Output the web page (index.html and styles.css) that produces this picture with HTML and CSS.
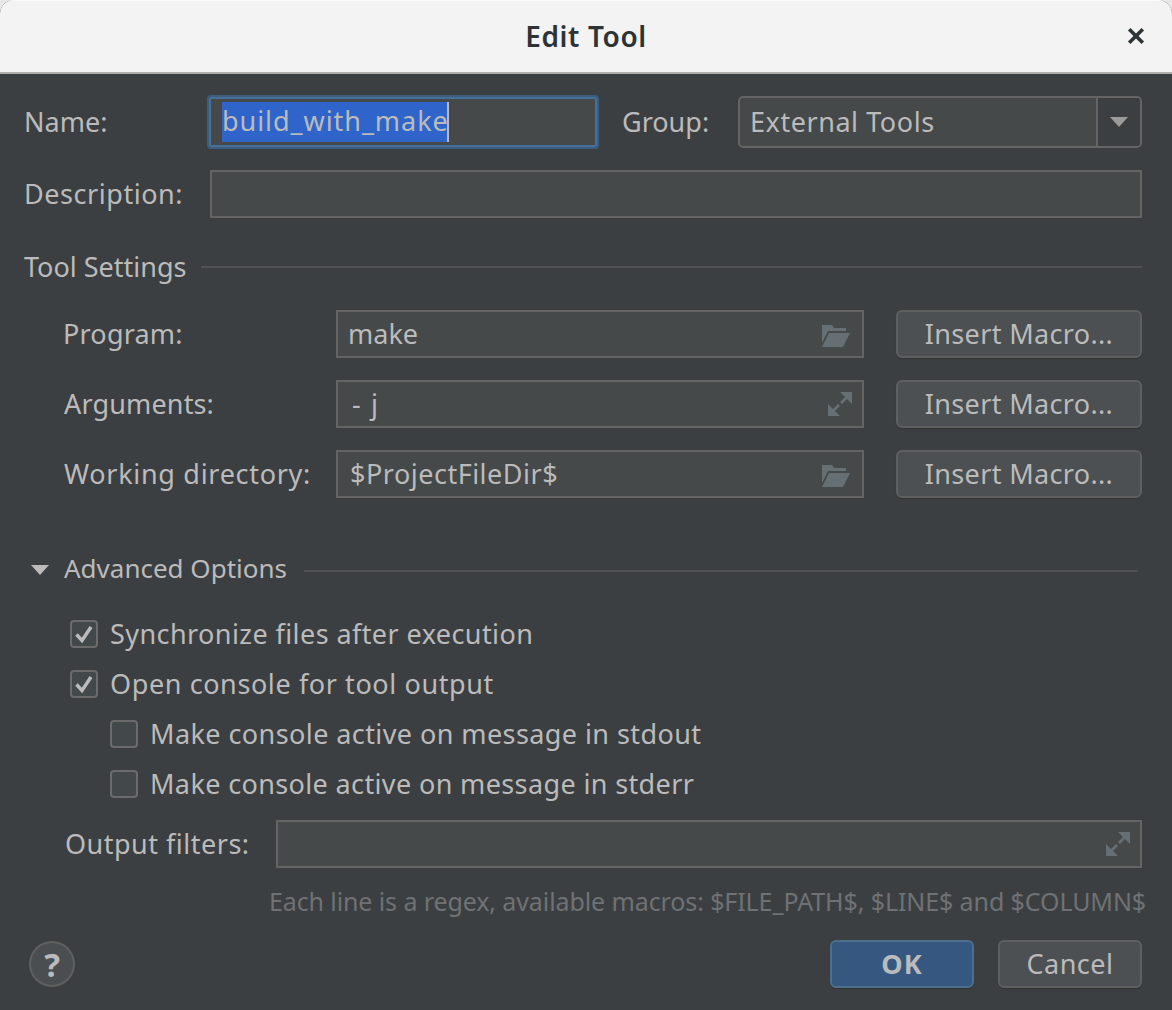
FILE: index.html
```html
<!DOCTYPE html>
<html lang="en">
<head>
    <meta charset="UTF-8">
    <meta name="viewport" content="width=device-width, initial-scale=1.0">
    <title>Edit Tool</title>
    <link rel="stylesheet" href="styles.css">
</head>
<body>
    <div class="window">
        <div class="titlebar">
            <span class="titleText">Edit Tool</span>
            <svg class="closeIcon" width="18" height="18" viewBox="0 0 18 18"><path d="M2.2 2.2L15.8 15.8M15.8 2.2L2.2 15.8" stroke="#2e3436" stroke-width="3.6" fill="none"/></svg>
        </div>

        <div class="content">
            <div class="row nameRow">
                <label class="nameLabel">Name:</label>
                <div class="nameField"><span class="selected">build_with_make</span><span class="caret"></span></div>
                <label class="groupLabel">Group:</label>
                <div class="combo">
                    <span class="comboText">External Tools</span>
                    <span class="comboArrow"><svg width="18" height="10" viewBox="0 0 18 10"><path d="M0 0H18L9 10Z" fill="#9b9b9b"/></svg></span>
                </div>
            </div>

            <div class="row descRow">
                <label class="descLabel">Description:</label>
                <div class="field"></div>
            </div>

            <div class="section toolSection">
                <span>Tool Settings</span>
                <div class="sectionLine"></div>
            </div>

            <div class="row toolRow firstTool">
                <label class="toolLabel">Program:</label>
                <div class="field toolField">
                    <span>make</span>
                    <svg class="fieldIcon folderIcon" width="30" height="24" viewBox="0 0 30 24"><path class="iconFill" d="M1 1H11L13 4H25V7H7L1 19Z M8 9H29L22 23H1Z"/></svg>
                </div>
                <button class="macroBtn" type="button">Insert Macro...</button>
            </div>
            <div class="row toolRow">
                <label class="toolLabel argLabel">Arguments:</label>
                <div class="field toolField">
                    <span class="argText">- j</span>
                    <svg class="fieldIcon expandIcon" width="24" height="24" viewBox="0 0 24 24"><path class="iconFill" d="M12 0H24V12L19 7L14 12L12 10L17 5Z M12 24H0V12L5 17L10 12L12 14L7 19Z"/></svg>
                </div>
                <button class="macroBtn" type="button">Insert Macro...</button>
            </div>
            <div class="row toolRow">
                <label class="toolLabel dirLabel">Working directory:</label>
                <div class="field toolField">
                    <span class="dirText">$ProjectFileDir$</span>
                    <svg class="fieldIcon folderIcon" width="30" height="24" viewBox="0 0 30 24"><path class="iconFill" d="M1 1H11L13 4H25V7H7L1 19Z M8 9H29L22 23H1Z"/></svg>
                </div>
                <button class="macroBtn" type="button">Insert Macro...</button>
            </div>

            <div class="section advSection">
                <svg class="advArrow" width="18" height="10" viewBox="0 0 18 10"><path d="M0 0H18L9 10Z" fill="#bbbbbb"/></svg>
                <span class="advText">Advanced Options</span>
                <div class="sectionLine advLine"></div>
            </div>

            <div class="checks">
                <div class="checkRow">
                    <span class="checkBox"><svg width="20" height="20" viewBox="0 0 20 20"><path d="M2.5 10.5L8 16.5L17 3" stroke="#bbbbbb" stroke-width="3.4" fill="none"/></svg></span>
                    <span class="checkText">Synchronize files after execution</span>
                </div>
                <div class="checkRow">
                    <span class="checkBox"><svg width="20" height="20" viewBox="0 0 20 20"><path d="M2.5 10.5L8 16.5L17 3" stroke="#bbbbbb" stroke-width="3.4" fill="none"/></svg></span>
                    <span class="checkText openText">Open console for tool output</span>
                </div>
                <div class="checkRow nested">
                    <span class="checkBox"></span>
                    <span class="checkText">Make console active on message in stdout</span>
                </div>
                <div class="checkRow nested">
                    <span class="checkBox"></span>
                    <span class="checkText errText">Make console active on message in stderr</span>
                </div>
            </div>

            <div class="row filterRow">
                <label class="filterLabel">Output filters:</label>
                <div class="field toolField">
                    <svg class="fieldIcon expandIcon" width="24" height="24" viewBox="0 0 24 24"><path class="iconFill" d="M12 0H24V12L19 7L14 12L12 10L17 5Z M12 24H0V12L5 17L10 12L12 14L7 19Z"/></svg>
                </div>
            </div>
            <div class="hint">Each line is a regex, available macros: $FILE_PATH$, $LINE$ and $COLUMN$</div>

            <div class="footer">
                <span class="helpBtn">?</span>
                <div class="footerBtns">
                    <button class="okBtn" type="button">OK</button>
                    <button class="cancelBtn" type="button">Cancel</button>
                </div>
            </div>
        </div>
    </div>
</body>
</html>
```

FILE: styles.css
```css
html, body {
    margin: 0;
    padding: 0;
    height: 100%;
    background-color: #e8e8e8;
}

body {
    font-family: 'Noto Sans', 'Open Sans', sans-serif;
    font-size: 27px;
    color: #bbbbbb;
    overflow: hidden;
}

.window {
    height: 1010px;
    display: flex;
    flex-direction: column;
    background-color: #3c3f41;
    border-radius: 14px 14px 0 0;
    overflow: hidden;
}

.titlebar {
    height: 71px;
    flex-shrink: 0;
    display: flex;
    align-items: center;
    justify-content: center;
    background-color: #f3f3f3;
    border-top: 1px solid #fafafa;
    border-bottom: 2px solid #b0afa9;
    position: relative;
    box-sizing: content-box;
    margin-bottom: -1px;
}

.titleText {
    font-size: 28px;
    font-weight: 600;
    letter-spacing: 0.6px;
    color: #2e3436;
    padding-bottom: 2px;
}

.closeIcon {
    position: absolute;
    right: 27px;
    top: 26px;
}

.content {
    flex: 1;
    padding: 22px 30px 0 24px;
    display: flex;
    flex-direction: column;
}

.row {
    display: flex;
    align-items: center;
}

label {
    flex-shrink: 0;
    padding-bottom: 2px;
}

.nameRow {
    height: 54px;
}

.nameLabel {
    width: 183px;
}

.nameField {
    width: 392px;
    height: 54px;
    box-sizing: border-box;
    display: flex;
    align-items: center;
    padding-left: 13px;
    background-color: #45494a;
    border: 2px solid #3d5d7d;
    box-shadow: inset 0 0 0 2px #46709a;
    border-radius: 4px;
}

.selected {
    background-color: #2f65ca;
    height: 40px;
    line-height: 37px;
    letter-spacing: 0.95px;
}

.caret {
    width: 2px;
    height: 40px;
    background-color: #bbbbbb;
    margin-left: -2px;
}

.groupLabel {
    width: 116px;
    margin-left: 23px;
}

.combo {
    flex: 1;
    height: 52px;
    box-sizing: border-box;
    display: flex;
    align-items: center;
    background-color: #45494a;
    border: 2px solid #646464;
    border-radius: 5px;
}

.comboText {
    flex: 1;
    padding: 0 0 2px 10px;
    letter-spacing: 0.55px;
}

.comboArrow {
    width: 42px;
    height: 100%;
    display: flex;
    align-items: center;
    justify-content: center;
    border-left: 2px solid #646464;
    background-color: #3c3f41;
    border-radius: 0 3px 3px 0;
}

.descRow {
    margin-top: 21px;
    height: 48px;
}

.descLabel {
    width: 186px;
    letter-spacing: 0.55px;
}

.field {
    flex: 1;
    height: 48px;
    box-sizing: border-box;
    background-color: #45494a;
    border: 2px solid #646464;
}

.section {
    display: flex;
    align-items: center;
    height: 30px;
}

.section span {
    padding-bottom: 2px;
}

.sectionLine {
    flex: 1;
    height: 2px;
    background-color: #515151;
    margin-left: 14px;
}

.toolSection {
    margin-top: 34px;
}

.toolRow {
    height: 48px;
    margin-top: 22px;
    padding-left: 39px;
}

.firstTool {
    margin-top: 28px;
}

.toolLabel {
    width: 273px;
    letter-spacing: 0.2px;
}

.argLabel {
    letter-spacing: 0.15px;
    margin-left: 1px;
    width: 272px;
}

.dirLabel {
    letter-spacing: 0.7px;
    margin-left: 1px;
    width: 272px;
}

.toolField {
    display: flex;
    align-items: center;
    justify-content: space-between;
    padding: 0 11px 0 10px;
}

.toolField span {
    padding-bottom: 2px;
}

.argText {
    padding-left: 4px;
    letter-spacing: 1.6px;
}

.dirText {
    padding-left: 2px;
    letter-spacing: 0.5px;
}

.fieldIcon {
    margin-left: auto;
}

.folderIcon {
    margin-top: 4px;
}

.expandIcon {
    margin-right: -1px;
}

.iconFill {
    fill: #666f73;
}

.macroBtn, .okBtn, .cancelBtn {
    height: 48px;
    box-sizing: border-box;
    font-family: inherit;
    font-size: 27px;
    color: #bbbbbb;
    background-color: #4c5052;
    border: 2px solid #5e6060;
    border-radius: 6px;
    box-shadow: 0 1px 1px rgba(0, 0, 0, 0.2);
    padding: 0 0 2px;
}

.macroBtn {
    width: 246px;
    margin-left: 32px;
    flex-shrink: 0;
    letter-spacing: 0.35px;
}

.advSection {
    margin-top: 56px;
}

.advArrow {
    margin-left: 7px;
    margin-top: 1px;
}

.advText {
    margin-left: 15px;
    font-size: 26px;
}

.advLine {
    margin: 4px 4px 0 17px;
}

.checks {
    margin-top: 25px;
}

.checkRow {
    height: 50px;
    display: flex;
    align-items: center;
    padding-left: 46px;
}

.nested {
    padding-left: 86px;
}

.checkText {
    letter-spacing: 0.42px;
    padding-bottom: 2px;
}

.openText {
    letter-spacing: 0.6px;
}

.errText {
    letter-spacing: 0.37px;
}

.checkBox {
    width: 28px;
    height: 28px;
    box-sizing: border-box;
    display: flex;
    align-items: center;
    justify-content: center;
    margin-right: 12px;
    background-color: #43494a;
    border: 2px solid #6b6b6b;
    border-radius: 4px;
}

.filterRow {
    margin-top: 11px;
    height: 48px;
    padding-left: 41px;
}

.filterLabel {
    width: 211px;
    letter-spacing: 0.5px;
}

.hint {
    margin: 14px -4px 0 0;
    height: 40px;
    line-height: 38px;
    text-align: right;
    font-size: 25px;
    letter-spacing: -0.1px;
    color: #6f7274;
}

.footer {
    display: flex;
    align-items: center;
    justify-content: space-between;
    margin-top: 18px;
}

.helpBtn {
    width: 46px;
    height: 46px;
    margin-left: 5px;
    box-sizing: border-box;
    display: flex;
    align-items: center;
    justify-content: center;
    border-radius: 50%;
    background-color: #4a4e50;
    border: 2px solid #5e6060;
    font-weight: 700;
    font-size: 33px;
}

.footerBtns {
    display: flex;
    gap: 24px;
}

.okBtn, .cancelBtn {
    width: 144px;
}

.okBtn {
    background-color: #365880;
    border-color: #4c708c;
    font-weight: 700;
    letter-spacing: 1px;
}

.cancelBtn {
    letter-spacing: 0.5px;
}
```
